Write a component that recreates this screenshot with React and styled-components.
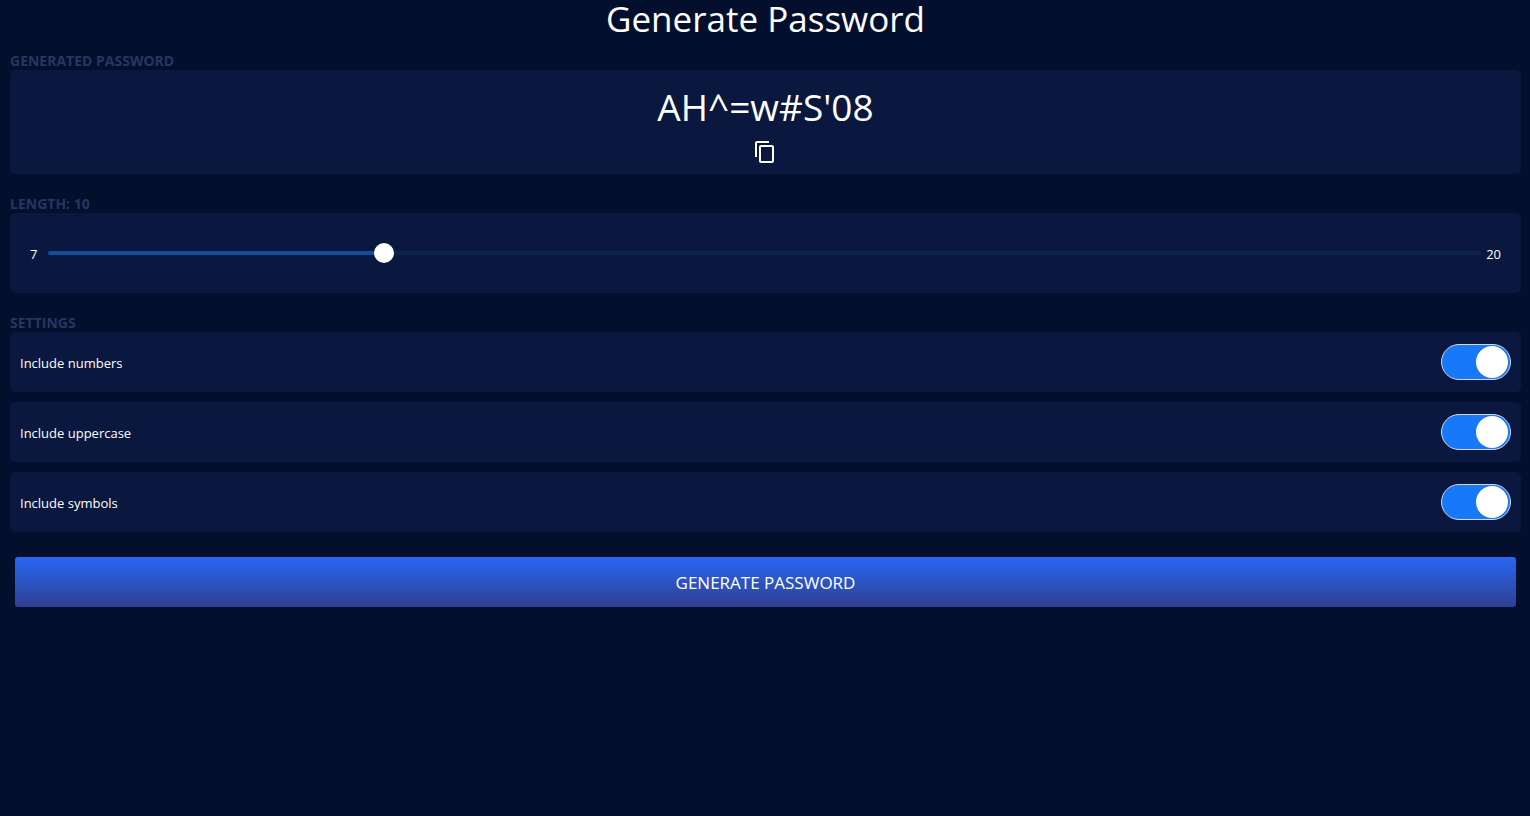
import React, { useState } from "react";
import styled, { createGlobalStyle } from "styled-components";

const GlobalStyle = createGlobalStyle`
  *, *::before, *::after { box-sizing: border-box; }
  body {
    margin: 0;
    min-height: 100vh;
    background: #040f2d;
    color: #fff;
    font: 13px/20px "Segoe UI", "Open Sans", sans-serif;
  }
`;

const Page = styled.main`
  display: flex;
  flex-direction: column;
  padding: 0 9px 0 10px;
`;

const Title = styled.h1`
  margin: 0 0 13px;
  font-size: 35px;
  font-weight: 400;
  line-height: 38px;
  text-align: center;
`;

const Section = styled.section`
  margin-bottom: 20px;
`;

const Heading = styled.h2`
  display: block;
  margin: 0;
  font-size: 14px;
  font-weight: 700;
  line-height: 19px;
  color: #2a3560;
  text-transform: uppercase;
`;

const Panel = styled.div`
  background: #0a173f;
  border-radius: 5px;
`;

const Result = styled(Panel)`
  display: flex;
  flex-direction: column;
  align-items: center;
  padding: 15px 10px 8px;
`;

const Password = styled.output`
  font-size: 37px;
  line-height: 44px;
`;

const CopyButton = styled.button`
  display: flex;
  margin-top: 9px;
  padding: 2px 3px 2px 2px;
  border: 0;
  background: none;
  color: #fff;
  cursor: pointer;
`;

const LengthPanel = styled(Panel)`
  display: flex;
  align-items: center;
  height: 80px;
  padding: 0 20px;
`;

const Bound = styled.span`
  padding-top: 2px;
`;

const Slider = styled.input`
  appearance: none;
  flex: 1;
  min-width: 0;
  height: 20px;
  margin: 0 5px 0 11px;
  background: none;
  cursor: pointer;

  &::-webkit-slider-runnable-track {
    height: 4px;
    border-radius: 2px;
    background: linear-gradient(to right, #124c9f ${(p) => p.$fill}%, #0c234e ${(p) => p.$fill}%);
  }

  &::-webkit-slider-thumb {
    appearance: none;
    width: 20px;
    height: 20px;
    margin-top: -8px;
    border-radius: 50%;
    background: #fff;
  }
`;

const SettingList = styled.div`
  display: flex;
  flex-direction: column;
  gap: 10px;
`;

const Setting = styled(Panel).attrs({ as: "label" })`
  display: flex;
  align-items: center;
  justify-content: space-between;
  height: 60px;
  padding: 0 10px;
  cursor: pointer;
`;

const SettingName = styled.span`
  padding-top: 2px;
`;

const Toggle = styled.input`
  appearance: none;
  display: flex;
  align-items: center;
  justify-content: ${(p) => (p.checked ? "flex-end" : "flex-start")};
  width: 70px;
  height: 36px;
  margin: 0;
  padding: 0 2px;
  border: 1px solid #d3d8e0;
  border-radius: 18px;
  background: ${(p) => (p.checked ? "#1779f7" : "#0c234e")};
  cursor: pointer;

  &::before {
    content: "";
    width: 32px;
    height: 32px;
    border-radius: 50%;
    background: #fff;
  }
`;

const GenerateButton = styled.button`
  height: 50px;
  margin: 5px;
  padding: 2px 10px 0;
  border: 0;
  border-radius: 3px;
  background: linear-gradient(#2867f3, #303f92);
  color: #fff;
  font: 400 17px/24px "Segoe UI", "Open Sans", sans-serif;
  text-transform: uppercase;
  cursor: pointer;
`;

const MIN = 7;
const MAX = 20;
const OPTIONS = ["numbers", "uppercase", "symbols"];
const CHARS = {
  numbers: "0123456789",
  uppercase: "ABCDEFGHIJKLMNOPQRSTUVWXYZ",
  symbols: "!@#$%^&*()=+-_'",
};

function CopyIcon() {
  return (
    <svg width="24" height="24" viewBox="0 0 24 24" fill="currentColor" aria-hidden="true">
      <path d="M16 1H4c-1.100 0-2 .9-2 2v14h2V3h12V1zm3 4H8c-1.100 0-2 .9-2 2v14c0 1.100.9 2 2 2h11c1.100 0 2-.9 2-2V7c0-1.100-.9-2-2-2zm0 16H8V7h11v14z" />
    </svg>
  );
}

export default function App() {
  const [length, setLength] = useState(10);
  const [password, setPassword] = useState("AH^=w#S'08");
  const [enabled, setEnabled] = useState({ numbers: true, uppercase: true, symbols: true });

  const generate = () => {
    const pool = OPTIONS.filter((o) => enabled[o]).reduce(
      (all, o) => all + CHARS[o],
      "abcdefghijklmnopqrstuvwxyz"
    );
    setPassword(
      Array.from({ length }, () => pool[Math.floor(Math.random() * pool.length)]).join("")
    );
  };

  return (
    <>
      <GlobalStyle />
      <Page>
        <Title>Generate Password</Title>
        <Section>
          <Heading>Generated password</Heading>
          <Result>
            <Password>{password}</Password>
            <CopyButton
              type="button"
              aria-label="Copy password"
              onClick={() => navigator.clipboard?.writeText(password)}
            >
              <CopyIcon />
            </CopyButton>
          </Result>
        </Section>
        <Section>
          <Heading as="label" htmlFor="length">
            Length: {length}
          </Heading>
          <LengthPanel>
            <Bound>{MIN}</Bound>
            <Slider
              id="length"
              type="range"
              min={MIN}
              max={MAX}
              value={length}
              $fill={((length - MIN) / (MAX - MIN)) * 100}
              onChange={(e) => setLength(Number(e.target.value))}
            />
            <Bound>{MAX}</Bound>
          </LengthPanel>
        </Section>
        <Section>
          <Heading>Settings</Heading>
          <SettingList>
            {OPTIONS.map((option) => (
              <Setting key={option} htmlFor={option}>
                <SettingName>Include {option}</SettingName>
                <Toggle
                  id={option}
                  type="checkbox"
                  checked={enabled[option]}
                  onChange={(e) => setEnabled({ ...enabled, [option]: e.target.checked })}
                />
              </Setting>
            ))}
          </SettingList>
        </Section>
        <GenerateButton type="button" onClick={generate}>
          Generate password
        </GenerateButton>
      </Page>
    </>
  );
}
